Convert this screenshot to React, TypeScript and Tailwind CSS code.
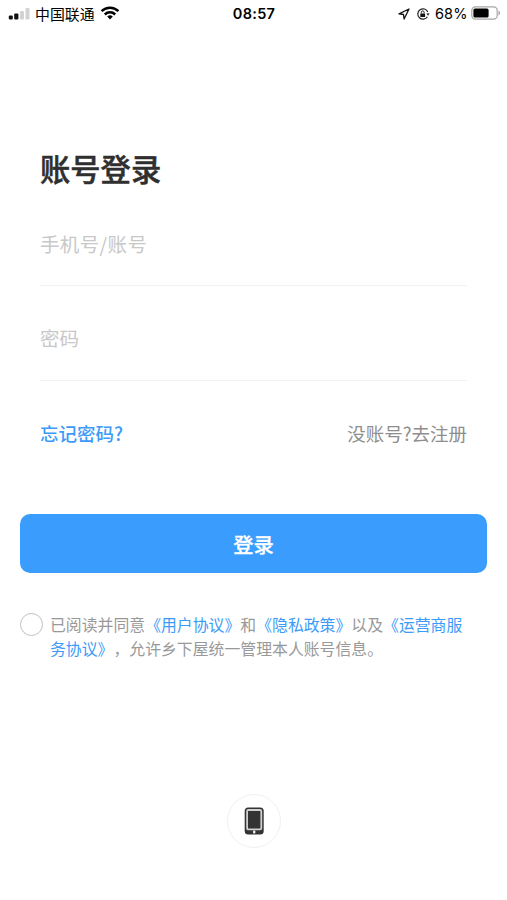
import { useState } from "react";

function StatusBar() {
  return (
    <div className="relative flex h-[27px] items-center justify-between pl-2 pr-[6px] text-black">
      <div className="flex items-center">
        <svg width="22" height="13" viewBox="0 0 22 13" className="mr-[5px]">
          <rect x="0.8" y="8.5" width="4" height="4" rx="1" fill="#111" />
          <rect x="6.2" y="6.5" width="4.2" height="6" rx="1" fill="#111" />
          <rect x="12" y="4" width="4" height="8.5" rx="1" fill="#d2d2d2" />
          <rect x="17.5" y="1" width="4" height="11.5" rx="1" fill="#d2d2d2" />
        </svg>
        <span className="pt-[3px] text-[14.9px] leading-[24px]">中国联通</span>
        <svg width="20" height="14" viewBox="0 0 20 14" className="mb-px ml-[5px]" fill="none" stroke="#000" strokeWidth="2.5">
          <path d="M1.6 5.2a12 12 0 0 1 16.8 0" />
          <path d="M4.8 8.5a7.4 7.4 0 0 1 10.4 0" />
          <path d="M10 13.4 7.2 10.6a4 4 0 0 1 5.6 0Z" fill="#000" stroke="none" />
        </svg>
      </div>

      <span className="absolute left-1/2 top-0 -translate-x-1/2 pl-px font-['Inter'] text-[14.5px] font-semibold leading-[27px] tracking-[0.3px]">
        08:57
      </span>

      <div className="flex items-center">
        <svg width="12" height="12" viewBox="0 0 12 12" fill="none" stroke="#111" strokeWidth="1.3" strokeLinejoin="round">
          <path d="M11 1 1 5.9l4.5.6.6 4.5Z" />
        </svg>
        <svg width="14" height="14" viewBox="0 0 14 14" className="ml-[6px]" fill="none" stroke="#222" strokeWidth="1.2">
          <path d="M11.4 9.8A5.2 5.2 0 1 1 11.8 5" />
          <path d="m10.4 6.4 3.2-.1-1.5 2.5Z" fill="#222" stroke="none" />
          <rect x="4.3" y="6.4" width="4.8" height="3.7" rx="0.6" fill="#111" stroke="none" />
          <path d="M5.3 6.5V5.3a1.4 1.4 0 0 1 2.8 0v1.2" strokeWidth="1" />
        </svg>
        <span className="ml-[5px] w-[33px] font-['Inter'] text-[14.5px] leading-[27px] tracking-[0.1px]">68%</span>
        <svg width="30" height="14" viewBox="0 0 30 14" className="mb-px ml-[3px]">
          <rect x="0.8" y="0.8" width="25.4" height="12.4" rx="3.6" fill="none" stroke="#a5a5a5" strokeWidth="1.2" />
          <rect x="2.4" y="2.4" width="15.2" height="9.2" rx="1.6" fill="#000" />
          <path d="M27.5 4.6c2 .8 2 4 0 4.8Z" fill="#a5a5a5" />
        </svg>
      </div>
    </div>
  );
}

export default function App() {
  const [account, setAccount] = useState("");
  const [password, setPassword] = useState("");
  const [agreed, setAgreed] = useState(false);

  return (
    <div className="flex h-[900px] w-full flex-col overflow-hidden bg-white font-['Liberation_Sans','Noto_Sans_CJK_SC',sans-serif]">
      <StatusBar />

      {/* Form */}
      <div className="px-10 pt-[117px] font-['Noto_Sans_CJK_SC',sans-serif]">
        <h1 className="text-[30.3px] font-medium leading-[48px] text-[#2f2f2f] [-webkit-text-stroke:0.5px_#2f2f2f]">账号登录</h1>
        <input
          value={account}
          onChange={(e) => setAccount(e.target.value)}
          placeholder="手机号/账号"
          className="mt-[11px] block h-[83px] w-full border-b border-[#f3f3f3] pb-[2px] text-[19.5px] tracking-[0.35px] outline-none placeholder:text-[#c8c8c8]"
        />
        <input
          type="password"
          value={password}
          onChange={(e) => setPassword(e.target.value)}
          placeholder="密码"
          className="mt-[11px] block h-[84px] w-full border-b border-[#f3f3f3] pb-[2px] text-[19.5px] outline-none placeholder:text-[#c8c8c8]"
        />
        <div className="mt-[38px] flex items-center justify-between text-[18.5px] leading-[28px]">
          <button className="font-medium text-[#3d9bf8]">忘记密码?</button>
          <button className="text-[#8e8e8e]">没账号?去注册</button>
        </div>
      </div>

      <div className="px-5 pt-[67px] font-['Noto_Sans_CJK_SC',sans-serif]">
        <button className="h-[59px] w-full rounded-[10px] bg-[#3a9dfd] pt-[2px] text-[20.3px] font-medium text-white [-webkit-text-stroke:0.3px_#fff]">
          登录
        </button>
      </div>

      {/* Agreement */}
      <div className="flex gap-[7px] pl-5 pt-[40px] font-['Noto_Sans_CJK_SC',sans-serif]">
        <button
          onClick={() => setAgreed(!agreed)}
          className="flex size-[23px] shrink-0 items-center justify-center rounded-full border-[1.5px] border-[#c0c0c6]"
        >
          {agreed && <span className="size-3 rounded-full bg-[#3a9dfd]" />}
        </button>
        <div className="whitespace-nowrap text-[15.87px] leading-[24px] text-[#999] [text-spacing-trim:space-all]">
          <p className="flex">
            <span>已阅读并同意</span>
            <span className="text-[#3d9bf8]">《用户协议》</span>
            <span>和</span>
            <span className="text-[#3d9bf8]">《隐私政策》</span>
            <span>以及</span>
            <span className="text-[#3d9bf8]">《运营商服</span>
          </p>
          <p className="flex">
            <span className="text-[#3d9bf8]">务协议》</span>
            <span>，允许乡下屋统一管理本人账号信息。</span>
          </p>
        </div>
      </div>

      {/* Phone login */}
      <div className="flex justify-center pt-[133px]">
        <button className="flex size-[54px] items-center justify-center rounded-full border border-[#f0f0f0]">
          <svg width="20" height="28" viewBox="0 0 20 28">
            <rect x="0.7" y="0.5" width="19" height="27" rx="3.5" fill="#333" />
            <rect x="3.1" y="3" width="14.2" height="19.4" rx="1.2" fill="#333" stroke="#cfcfcf" strokeWidth="1.8" />
            <rect x="9" y="23.6" width="2.4" height="3" rx="0.8" fill="#eee" />
          </svg>
        </button>
      </div>
    </div>
  );
}
